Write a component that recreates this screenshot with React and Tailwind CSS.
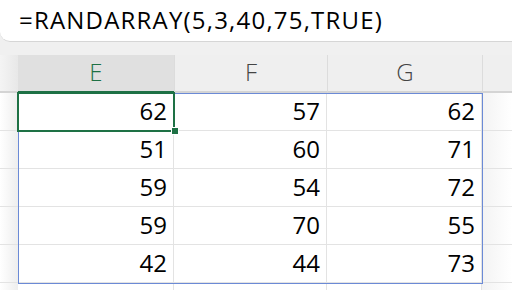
import React from "react";

const rows = [
  [62, 57, 62],
  [51, 60, 71],
  [59, 54, 72],
  [59, 70, 55],
  [42, 44, 73],
];

const cols = [
  { label: "E", w: "w-[156px]", selected: true },
  { label: "F", w: "w-[153px]" },
  { label: "G", w: "w-[155px]" },
];

const font = { fontFamily: '"Open Sans", "Noto Sans", sans-serif' };

export default function App() {
  return (
    <div className="w-[512px] h-[290px] overflow-hidden bg-[#f0f0f0] text-black" style={font}>
      {/* Formula bar */}
      <div className="h-[42px] bg-white rounded-bl-[10px] border-b border-[#d6d6d6] flex items-center pl-[19px] text-[24px] tracking-[1.2px] leading-none pb-[2px]">
        =RANDARRAY(5,3,40,75,TRUE)
      </div>
      <div className="h-[13px]" />

      {/* Column headers */}
      <div className="flex h-[38px]">
        <div className="w-[18px] bg-gradient-to-r from-[#f4f4f4] to-[#e8e8e8] border-b-2 border-[#d4d4d4]" />
        {cols.map((c) => (
          <div
            key={c.label}
            className={
              c.selected
                ? `${c.w} bg-[#e0e0e0] border-b-2 border-[#1e7145] text-[#1e7145] flex items-center justify-center text-[24px] font-light pb-[3px]`
                : `${c.w} bg-[#efefef] border-b-2 border-[#d4d4d4] border-l border-l-[#dcdcdc] text-[#444] flex items-center justify-center text-[24px] font-light pb-[3px]`
            }
          >
            {c.label}
          </div>
        ))}
        <div className="flex-1 bg-[#efefef] border-b-2 border-[#d4d4d4] border-l border-l-[#dcdcdc]" />
      </div>

      {/* Grid */}
      <div className="relative">
        {[...rows, null].map((r, i) => (
          <div key={i} className="flex h-[38px]">
            <div className="w-[18px] bg-gradient-to-r from-white to-[#eeeeee] border-b border-[#e3e3e3]" />
            {cols.map((c, j) => (
              <div
                key={c.label}
                className={`${c.w} bg-white border-b border-r border-[#e3e3e3] flex items-center justify-end pr-[6px] text-[24px] pb-[2px]`}
              >
                {r ? r[j] : ""}
              </div>
            ))}
            <div className="flex-1 bg-gradient-to-r from-[#f3f3f3] to-white border-b border-[#e3e3e3]" />
          </div>
        ))}

        {/* Spill range outline */}
        <div className="absolute left-[18px] top-0 w-[465px] h-[191px] border border-[#6b8ad6] pointer-events-none" />

        {/* Active cell */}
        <div className="absolute left-[17px] top-[-1px] w-[158px] h-[40px] border-2 border-[#1e7145] pointer-events-none" />
        <div className="absolute left-[171px] top-[34px] w-[8px] h-[8px] bg-[#1e7145] border border-white" />
      </div>
    </div>
  );
}
